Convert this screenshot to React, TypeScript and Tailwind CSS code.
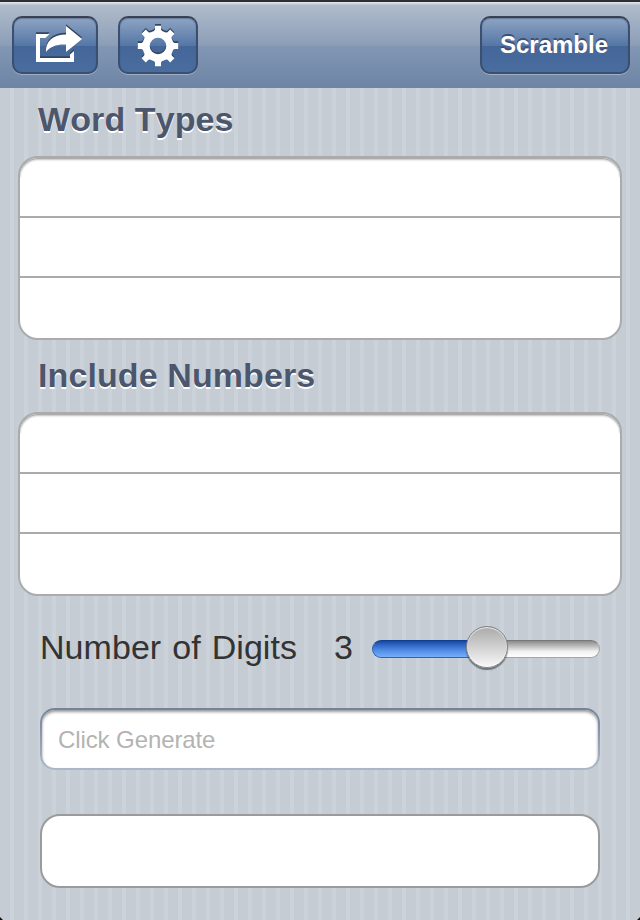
import type { ReactNode } from "react";

const navButton =
  "relative h-[58px] rounded-[10px] border-2 border-[#3b5071] border-t-[#3a4252] bg-[linear-gradient(to_bottom,#8ea4c3_0px,#5476a6_28px,#446698_28px,#4a6d9f_54px)] bg-origin-padding shadow-[0_1px_0_rgba(255,255,255,0.32),inset_0_1px_1px_rgba(30,50,90,0.35)] flex items-center justify-center";

function ShareIcon() {
  return (
    <svg width="50" height="44" viewBox="34 22 50 44" className="absolute left-[20px] top-[4px]">
      <defs>
        <g id="share">
          <path d="M36 34H49.5L45.5 38H40V58H70V54.5L74 51V62H36Z" />
          <path d="M46 52C45.5 41 53 34.5 66 34.5V26L82 39L66 52V44.5C57 44 50 46.5 46 52Z" />
        </g>
      </defs>
      <use href="#share" y="-1.8" fill="#34455f" />
      <use href="#share" fill="#fff" />
    </svg>
  );
}

function GearIcon() {
  return (
    <svg width="44" height="46" viewBox="136 22 44 46" className="absolute left-[16px] top-[4px]">
      <defs>
        <g id="gear">
          {[0, 45, 90, 135, 180, 225, 270, 315].map((a) => (
            <path key={a} d="M153 32.5L155 29.5V25.8H161V29.5L163 32.5Z" transform={`rotate(${a} 158 46)`} />
          ))}
          <path
            fillRule="evenodd"
            d="M158 30.5A15.5 15.5 0 1 1 158 61.5A15.5 15.5 0 1 1 158 30.5ZM158 37.7A8.3 8.3 0 1 0 158 54.3A8.3 8.3 0 1 0 158 37.7Z"
          />
        </g>
      </defs>
      <use href="#gear" y="-1.7" fill="#34455f" />
      <use href="#gear" fill="#fff" />
    </svg>
  );
}

function Heading({ children }: { children: ReactNode }) {
  return (
    <h2 className="ml-[38px] h-10 whitespace-nowrap text-[34px] leading-[38px] font-bold tracking-[0.1px] [font-kerning:none] text-[#4c566c] [text-shadow:0_2px_0_#fff]">
      {children}
    </h2>
  );
}

function Group() {
  return (
    <div className="relative mx-[18px] h-[184px] overflow-hidden rounded-[20px] border-2 border-[#aaabad] bg-white">
      <div className="pointer-events-none absolute inset-x-0 top-0 h-5 overflow-hidden">
        <div className="h-16 rounded-[18px] shadow-[inset_0_1px_0_#acacac,inset_0_2px_2px_#c0c0c0]" />
      </div>
      <div className="h-[60px] border-b-2 border-[#ababab]" />
      <div className="h-[60px] border-b-2 border-[#ababab]" />
      <div className="h-[60px]" />
    </div>
  );
}

export default function App() {
  return (
    <main className="relative h-[920px] w-[640px] overflow-hidden bg-[#c5ccd4] bg-[repeating-linear-gradient(to_right,#c5ccd4_0px,#c5ccd4_10px,#cbd2d9_10px,#cbd2d9_14px)] font-['Liberation_Sans',Arial,sans-serif]">
      <header className="flex h-[88px] items-start border-t-2 border-[#2d2f31] bg-[linear-gradient(to_bottom,#e3e7ea_0px,#cbd3dc_2px,#b0bccb_3px,#8b9db7_44px,#8297b4_44px,#6d84a5_86px)] bg-origin-padding px-3 pt-[14px] pr-[10px]">
        <button aria-label="Share" className={`w-[86px] ${navButton}`}>
          <ShareIcon />
        </button>
        <button aria-label="Settings" className={`ml-5 w-20 ${navButton}`}>
          <GearIcon />
        </button>
        <button className={`ml-auto w-[150px] text-2xl leading-6 font-bold text-white [text-shadow:0_-2px_0_#3c5172] ${navButton}`}>
          <span className="mr-[2px]">Scramble</span>
        </button>
      </header>

      <section className="pt-3">
        <Heading>Word Types</Heading>
        <div className="h-4" />
        <Group />
      </section>
      <section className="pt-4">
        <Heading>Include Numbers</Heading>
        <div className="h-4" />
        <Group />
      </section>

      <div className="flex h-[112px] items-start pt-[30px] pl-10 text-[34px] text-[#333]">
        <span className="w-[294px] whitespace-nowrap leading-[42px] tracking-[0.05px] [word-spacing:1.5px]">Number of Digits</span>
        <span className="w-[38px] leading-[42px]">3</span>
        <div className="relative mt-[14px] flex h-[18px] w-[228px]">
          <div className="w-[114px] rounded-l-full border border-[#2d63bb] border-t-[#123f90] bg-[linear-gradient(to_bottom,#1747a0,#2f68c4_25%,#5792ea_65%,#75aefa)]" />
          <div className="w-[114px] rounded-r-full border border-[#a5a5a5] border-t-[#777] bg-[linear-gradient(to_bottom,#8b8b8b,#b8b8b8_30%,#f1f1f1_65%,#fff)]" />
          <div className="absolute top-[-14px] left-[94px] size-[42px] rounded-full border border-[#858585] bg-[linear-gradient(to_bottom,#aaa,#f8f8f8)] shadow-[inset_0_1px_1px_#eee,inset_0_-1px_1px_#fff,0_2px_1px_rgba(50,55,60,0.6)]" />
        </div>
      </div>

      <div className="mx-10 h-[62px] rounded-[15px] bg-[linear-gradient(to_bottom,#71829b,#adb8c7)] p-[2px]">
        <input
          aria-label="Generated text"
          placeholder="Click Generate"
          className="block h-full w-full rounded-[13px] bg-white px-4 pt-[2px] text-2xl tracking-[-0.1px] outline-none placeholder:text-[#b3b3b3] placeholder:opacity-100 shadow-[inset_0_2px_3px_#999]"
        />
      </div>
      <div className="mx-10 mt-[44px] h-[74px] rounded-[20px] border-2 border-[#9b9b9b] bg-white" />
      <svg width="640" height="4" className="absolute bottom-0 left-0" fill="#111">
        <path d="M0 1L3 4H0ZM640 1L637 4H640Z" />
      </svg>
    </main>
  );
}
